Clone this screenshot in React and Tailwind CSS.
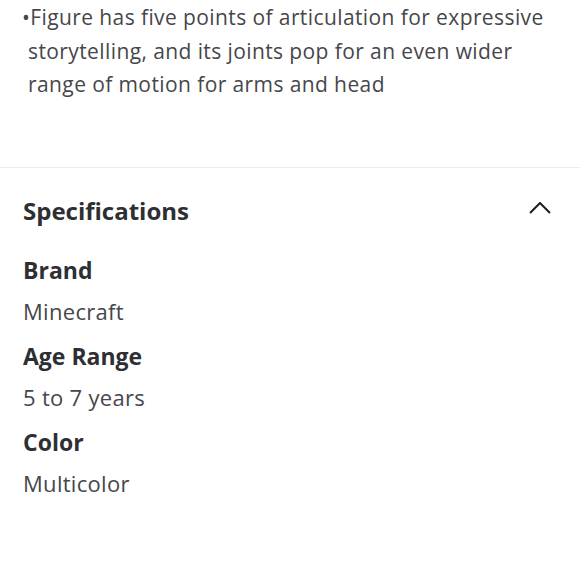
export default function App() {
  const specs = [
    { label: 'Brand', value: 'Minecraft' },
    { label: 'Age Range', value: '5 to 7 years' },
    { label: 'Color', value: 'Multicolor' },
  ]

  return (
    <div className="w-[580px] h-[580px] bg-white overflow-hidden font-['Open_Sans',sans-serif]">
      <p className="pl-[28px] pr-2 -indent-[6px] text-[21px] tracking-[0.4px] leading-[33.5px] text-[#46474a] pt-[1px] whitespace-nowrap">
        •Figure has five points of articulation for expressive<br />
        storytelling, and its joints pop for an even wider<br />
        range of motion for arms and head
      </p>

      <div className="mt-[65px] border-t border-[#ececec]" />

      <div className="px-[23px] pt-[27px]">
        <div className="flex items-center justify-between">
          <h2 className="text-[24px] font-bold text-[#2e2f32] leading-[32px]">Specifications</h2>
          <svg className="w-[22px] h-[12px] mr-[6px] mb-[6px] text-[#1d1d1f]" viewBox="0 0 22 12" fill="none" stroke="currentColor" strokeWidth="2">
            <path d="M1 11 L11 1 L21 11" />
          </svg>
        </div>

        <div className="mt-[27px] flex flex-col">
          {specs.map((s) => (
            <div key={s.label} className="mb-[13px]">
              <h3 className="text-[23px] font-bold text-[#2e2f32] leading-[32px]">{s.label}</h3>
              <p className="text-[22px] tracking-[0.3px] text-[#46474a] leading-[32px] mt-[9px]">{s.value}</p>
            </div>
          ))}
        </div>
      </div>
    </div>
  )
}
